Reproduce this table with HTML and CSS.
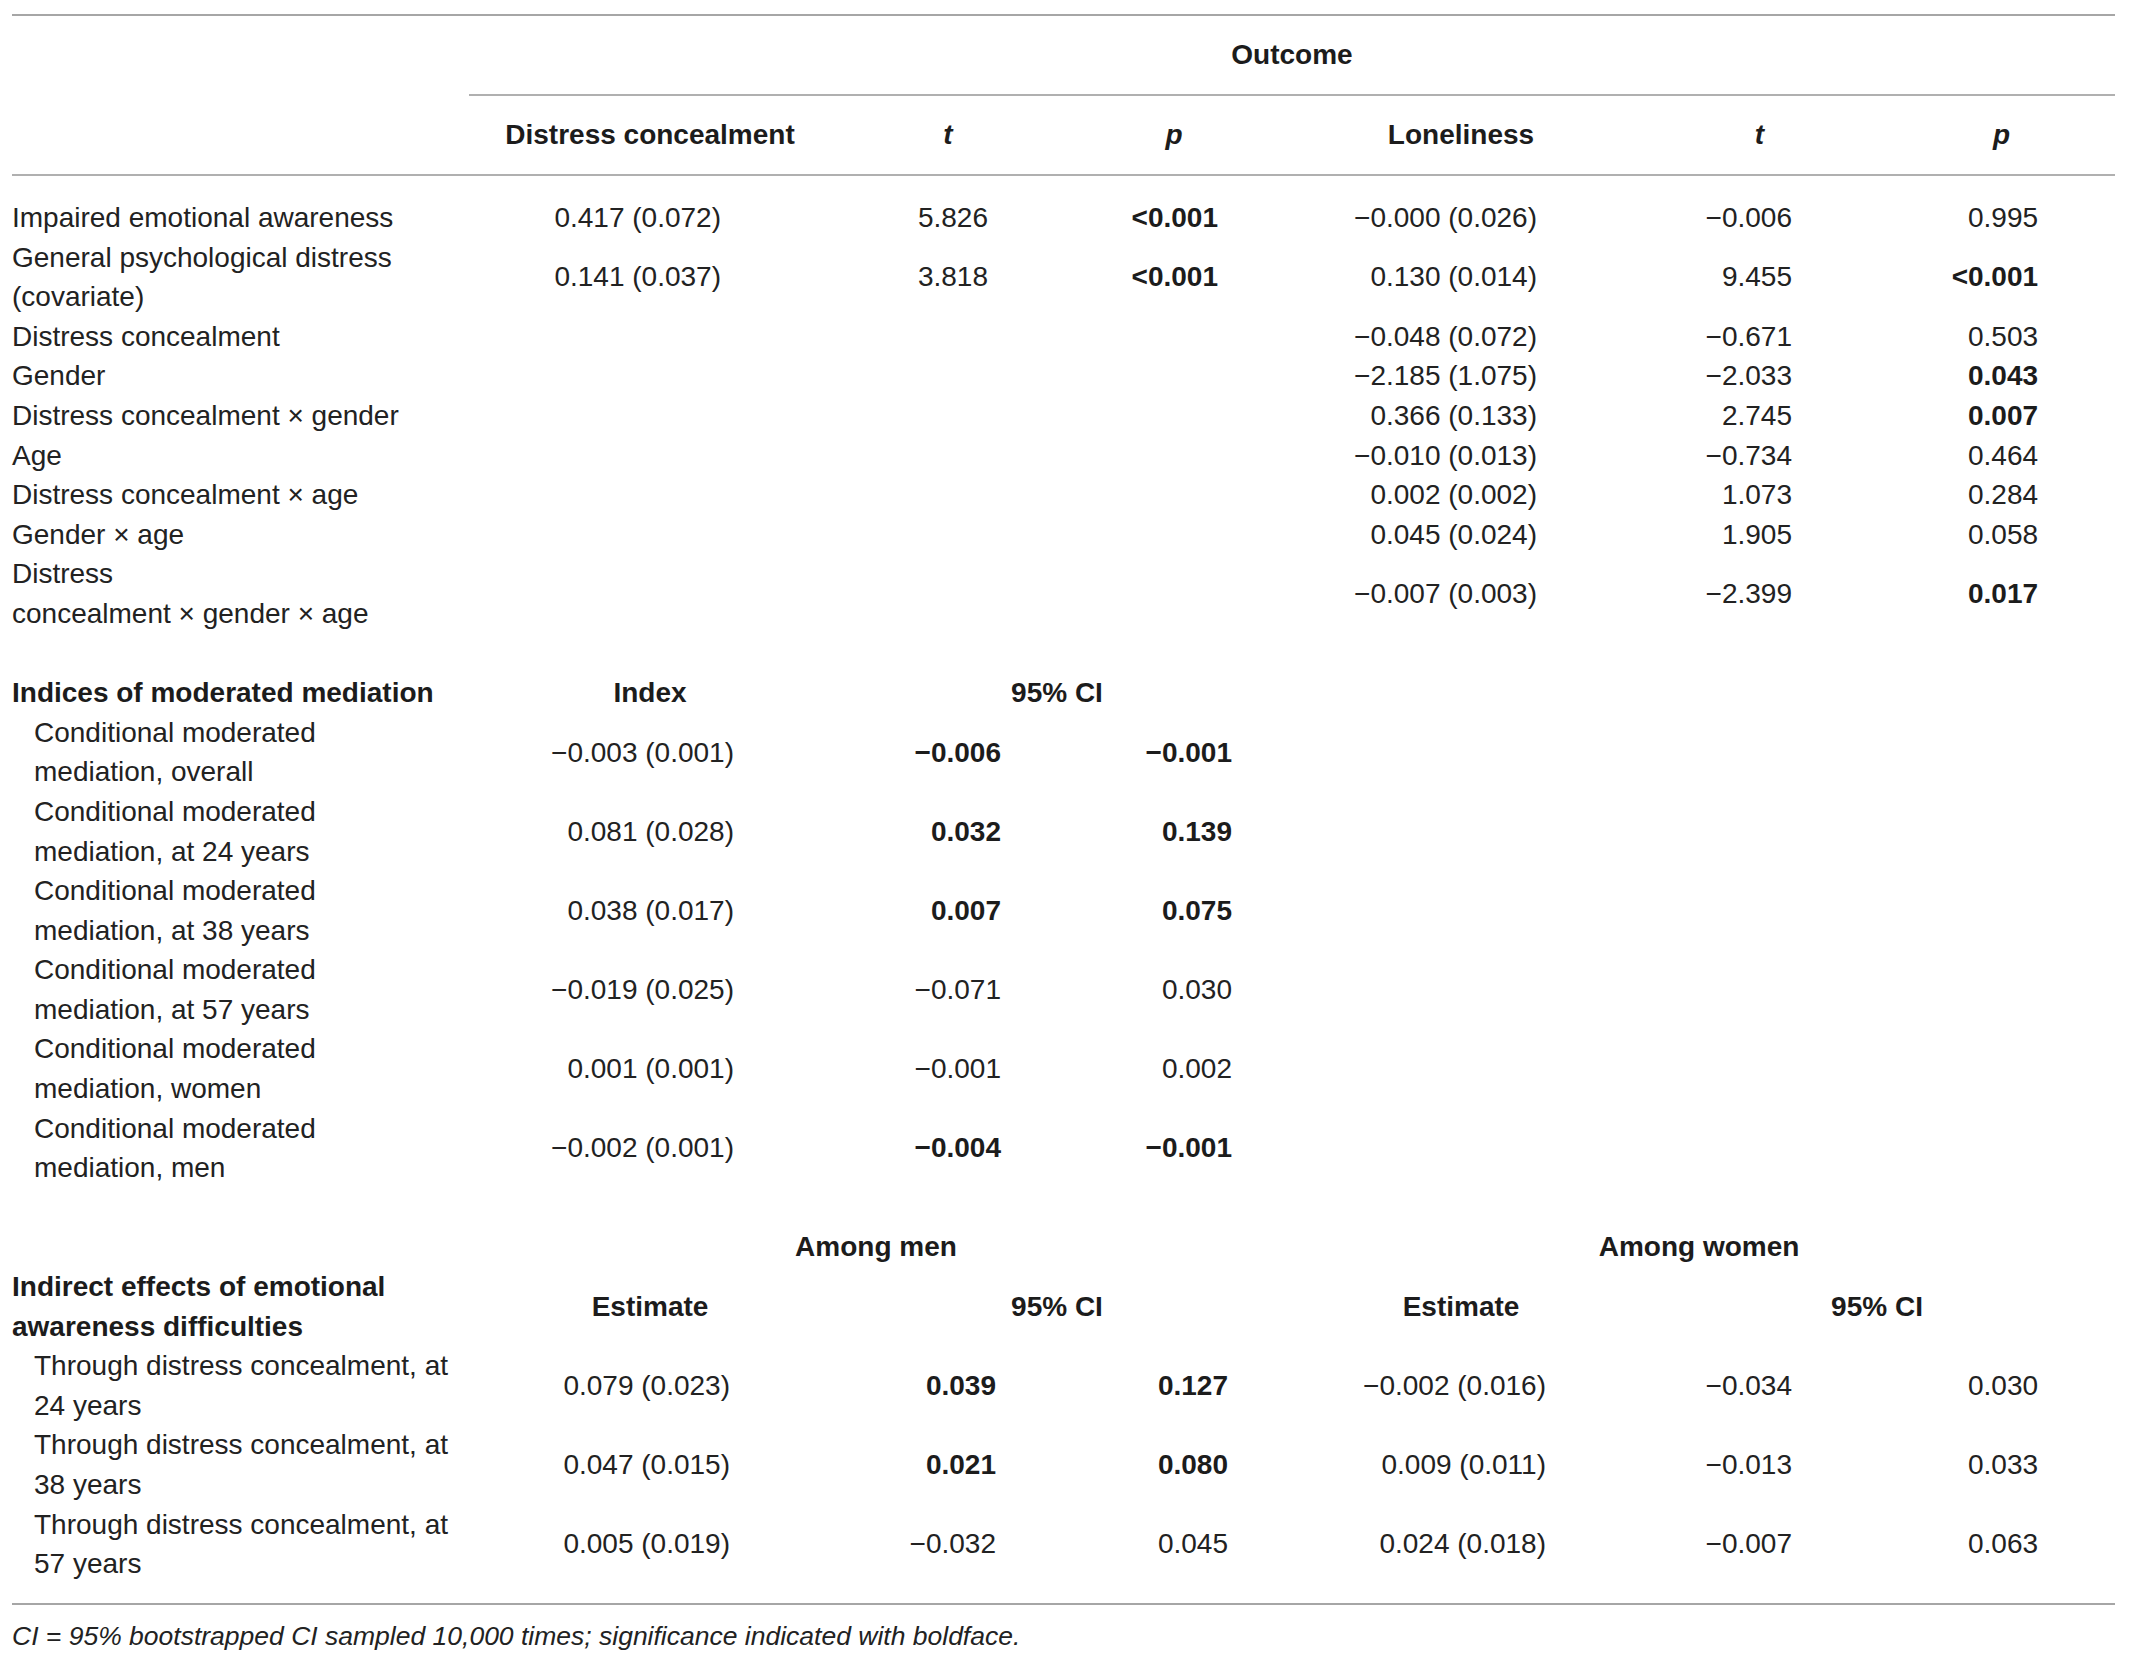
FILE: index.html
```html
<html>

<head>
    <title>Moderated mediation results</title>
    <link rel="stylesheet" href="styles.css">
</head>

<body class="body">
    <div class="page">
        <table class="results">
            <colgroup>
                <col class="colLabel">
                <col class="colA">
                <col class="colB">
                <col class="colC">
                <col class="colD">
                <col class="colE">
                <col class="colF">
            </colgroup>
            <thead>
                <tr class="headTop">
                    <th></th>
                    <th colspan="6" class="outcome">Outcome</th>
                </tr>
                <tr class="headCols">
                    <th></th>
                    <th>Distress concealment</th>
                    <th><i>t</i></th>
                    <th><i>p</i></th>
                    <th>Loneliness</th>
                    <th><i>t</i></th>
                    <th class="lastP"><i>p</i></th>
                </tr>
            </thead>
            <tbody class="secModels">
                <tr class="firstRow">
                    <td class="label">Impaired emotional awareness</td>
                    <td>0.417 (0.072)</td>
                    <td>5.826</td>
                    <td><b>&lt;0.001</b></td>
                    <td>&minus;0.000 (0.026)</td>
                    <td>&minus;0.006</td>
                    <td>0.995</td>
                </tr>
                <tr>
                    <td class="label">General psychological distress<br>(covariate)</td>
                    <td>0.141 (0.037)</td>
                    <td>3.818</td>
                    <td><b>&lt;0.001</b></td>
                    <td>0.130 (0.014)</td>
                    <td>9.455</td>
                    <td><b>&lt;0.001</b></td>
                </tr>
                <tr>
                    <td class="label">Distress concealment</td>
                    <td></td>
                    <td></td>
                    <td></td>
                    <td>&minus;0.048 (0.072)</td>
                    <td>&minus;0.671</td>
                    <td>0.503</td>
                </tr>
                <tr>
                    <td class="label">Gender</td>
                    <td></td>
                    <td></td>
                    <td></td>
                    <td>&minus;2.185 (1.075)</td>
                    <td>&minus;2.033</td>
                    <td><b>0.043</b></td>
                </tr>
                <tr>
                    <td class="label">Distress concealment &times; gender</td>
                    <td></td>
                    <td></td>
                    <td></td>
                    <td>0.366 (0.133)</td>
                    <td>2.745</td>
                    <td><b>0.007</b></td>
                </tr>
                <tr>
                    <td class="label">Age</td>
                    <td></td>
                    <td></td>
                    <td></td>
                    <td>&minus;0.010 (0.013)</td>
                    <td>&minus;0.734</td>
                    <td>0.464</td>
                </tr>
                <tr>
                    <td class="label">Distress concealment &times; age</td>
                    <td></td>
                    <td></td>
                    <td></td>
                    <td>0.002 (0.002)</td>
                    <td>1.073</td>
                    <td>0.284</td>
                </tr>
                <tr>
                    <td class="label">Gender &times; age</td>
                    <td></td>
                    <td></td>
                    <td></td>
                    <td>0.045 (0.024)</td>
                    <td>1.905</td>
                    <td>0.058</td>
                </tr>
                <tr>
                    <td class="label">Distress<br>concealment &times; gender &times; age</td>
                    <td></td>
                    <td></td>
                    <td></td>
                    <td>&minus;0.007 (0.003)</td>
                    <td>&minus;2.399</td>
                    <td><b>0.017</b></td>
                </tr>
            </tbody>
            <tbody class="secIndices">
                <tr class="spacer">
                    <td colspan="7"></td>
                </tr>
                <tr class="subHead">
                    <th class="label">Indices of moderated mediation</th>
                    <th>Index</th>
                    <th colspan="2">95% CI</th>
                    <th></th>
                    <th></th>
                    <th></th>
                </tr>
                <tr>
                    <td class="label sub">Conditional moderated<br>mediation, overall</td>
                    <td>&minus;0.003 (0.001)</td>
                    <td><b>&minus;0.006</b></td>
                    <td><b>&minus;0.001</b></td>
                    <td></td>
                    <td></td>
                    <td></td>
                </tr>
                <tr>
                    <td class="label sub">Conditional moderated<br>mediation, at 24 years</td>
                    <td>0.081 (0.028)</td>
                    <td><b>0.032</b></td>
                    <td><b>0.139</b></td>
                    <td></td>
                    <td></td>
                    <td></td>
                </tr>
                <tr>
                    <td class="label sub">Conditional moderated<br>mediation, at 38 years</td>
                    <td>0.038 (0.017)</td>
                    <td><b>0.007</b></td>
                    <td><b>0.075</b></td>
                    <td></td>
                    <td></td>
                    <td></td>
                </tr>
                <tr>
                    <td class="label sub">Conditional moderated<br>mediation, at 57 years</td>
                    <td>&minus;0.019 (0.025)</td>
                    <td>&minus;0.071</td>
                    <td>0.030</td>
                    <td></td>
                    <td></td>
                    <td></td>
                </tr>
                <tr>
                    <td class="label sub">Conditional moderated<br>mediation, women</td>
                    <td>0.001 (0.001)</td>
                    <td>&minus;0.001</td>
                    <td>0.002</td>
                    <td></td>
                    <td></td>
                    <td></td>
                </tr>
                <tr>
                    <td class="label sub">Conditional moderated<br>mediation, men</td>
                    <td>&minus;0.002 (0.001)</td>
                    <td><b>&minus;0.004</b></td>
                    <td><b>&minus;0.001</b></td>
                    <td></td>
                    <td></td>
                    <td></td>
                </tr>
            </tbody>
            <tbody class="secIndirect">
                <tr class="spacer">
                    <td colspan="7"></td>
                </tr>
                <tr class="subHead">
                    <th></th>
                    <th colspan="3">Among men</th>
                    <th colspan="3">Among women</th>
                </tr>
                <tr class="subHead">
                    <th class="label">Indirect effects of emotional<br>awareness difficulties</th>
                    <th>Estimate</th>
                    <th colspan="2">95% CI</th>
                    <th>Estimate</th>
                    <th colspan="2">95% CI</th>
                </tr>
                <tr>
                    <td class="label sub">Through distress concealment, at<br>24 years</td>
                    <td>0.079 (0.023)</td>
                    <td><b>0.039</b></td>
                    <td><b>0.127</b></td>
                    <td>&minus;0.002 (0.016)</td>
                    <td>&minus;0.034</td>
                    <td>0.030</td>
                </tr>
                <tr>
                    <td class="label sub">Through distress concealment, at<br>38 years</td>
                    <td>0.047 (0.015)</td>
                    <td><b>0.021</b></td>
                    <td><b>0.080</b></td>
                    <td>0.009 (0.011)</td>
                    <td>&minus;0.013</td>
                    <td>0.033</td>
                </tr>
                <tr class="lastRow">
                    <td class="label sub">Through distress concealment, at<br>57 years</td>
                    <td>0.005 (0.019)</td>
                    <td>&minus;0.032</td>
                    <td>0.045</td>
                    <td>0.024 (0.018)</td>
                    <td>&minus;0.007</td>
                    <td>0.063</td>
                </tr>
            </tbody>
        </table>
        <p class="note">CI = 95% bootstrapped CI sampled 10,000 times; significance indicated with boldface.</p>
    </div>
</body>

</html>
```

FILE: styles.css
```css
.body {
    margin: 0;
    background-color: #ffffff;
    font-family: "Liberation Sans", Arial, sans-serif;
    font-size: 28px;
    color: #222222;
}

.page {
    padding: 14px 0 0 12px;
    width: 2103px;
}

.results {
    width: 2103px;
    table-layout: fixed;
    border-collapse: collapse;
    border-bottom: 2px solid #a6a6a6;
    font-family: "Liberation Sans", Arial, sans-serif;
    font-size: 28px;
    color: #222222;
}

.colLabel { width: 457px; }
.colA { width: 362px; }
.colB { width: 234px; }
.colC { width: 218px; }
.colD { width: 356px; }
.colE { width: 241px; }
.colF { width: 235px; }

.results th,
.results td {
    padding: 0;
    font-size: 28px;
    line-height: 39.6px;
    vertical-align: middle;
    white-space: nowrap;
}

.results th {
    font-weight: bold;
    text-align: center;
    color: #1c1c1c;
}

.results td {
    text-align: right;
}

.results b {
    color: #1c1c1c;
}

.results .label {
    text-align: left;
}

.results .sub {
    padding-left: 22px;
}

/* header block */

.headTop {
    border-top: 2px solid #a6a6a6;
}

.headTop th {
    height: 80px;
}

.outcome {
    border-bottom: 2px solid #b0b0b0;
}

.headCols {
    border-bottom: 2px solid #b0b0b0;
}

.headCols th {
    height: 80px;
}

.headCols .lastP {
    padding-left: 8px;
}

.firstRow td {
    padding-top: 22px;
}

.lastRow td {
    padding-bottom: 19px;
}

.spacer td {
    height: 39.6px;
}

/* right padding of number columns, per section */

.secModels td:nth-child(2) { padding-right: 110px; }
.secModels td:nth-child(3) { padding-right: 77px; }
.secModels td:nth-child(4) { padding-right: 65px; }
.secModels td:nth-child(5) { padding-right: 102px; }
.secModels td:nth-child(6) { padding-right: 88px; }
.secModels td:nth-child(7) { padding-right: 77px; }

.secIndices td:nth-child(2) { padding-right: 97px; }
.secIndices td:nth-child(3) { padding-right: 64px; }
.secIndices td:nth-child(4) { padding-right: 51px; }

.secIndirect td:nth-child(2) { padding-right: 101px; }
.secIndirect td:nth-child(3) { padding-right: 69px; }
.secIndirect td:nth-child(4) { padding-right: 55px; }
.secIndirect td:nth-child(5) { padding-right: 93px; }
.secIndirect td:nth-child(6) { padding-right: 88px; }
.secIndirect td:nth-child(7) { padding-right: 77px; }

.note {
    margin: 11px 0 0 0;
    font-size: 26.5px;
    line-height: 40px;
    font-style: italic;
    color: #222222;
}
```
